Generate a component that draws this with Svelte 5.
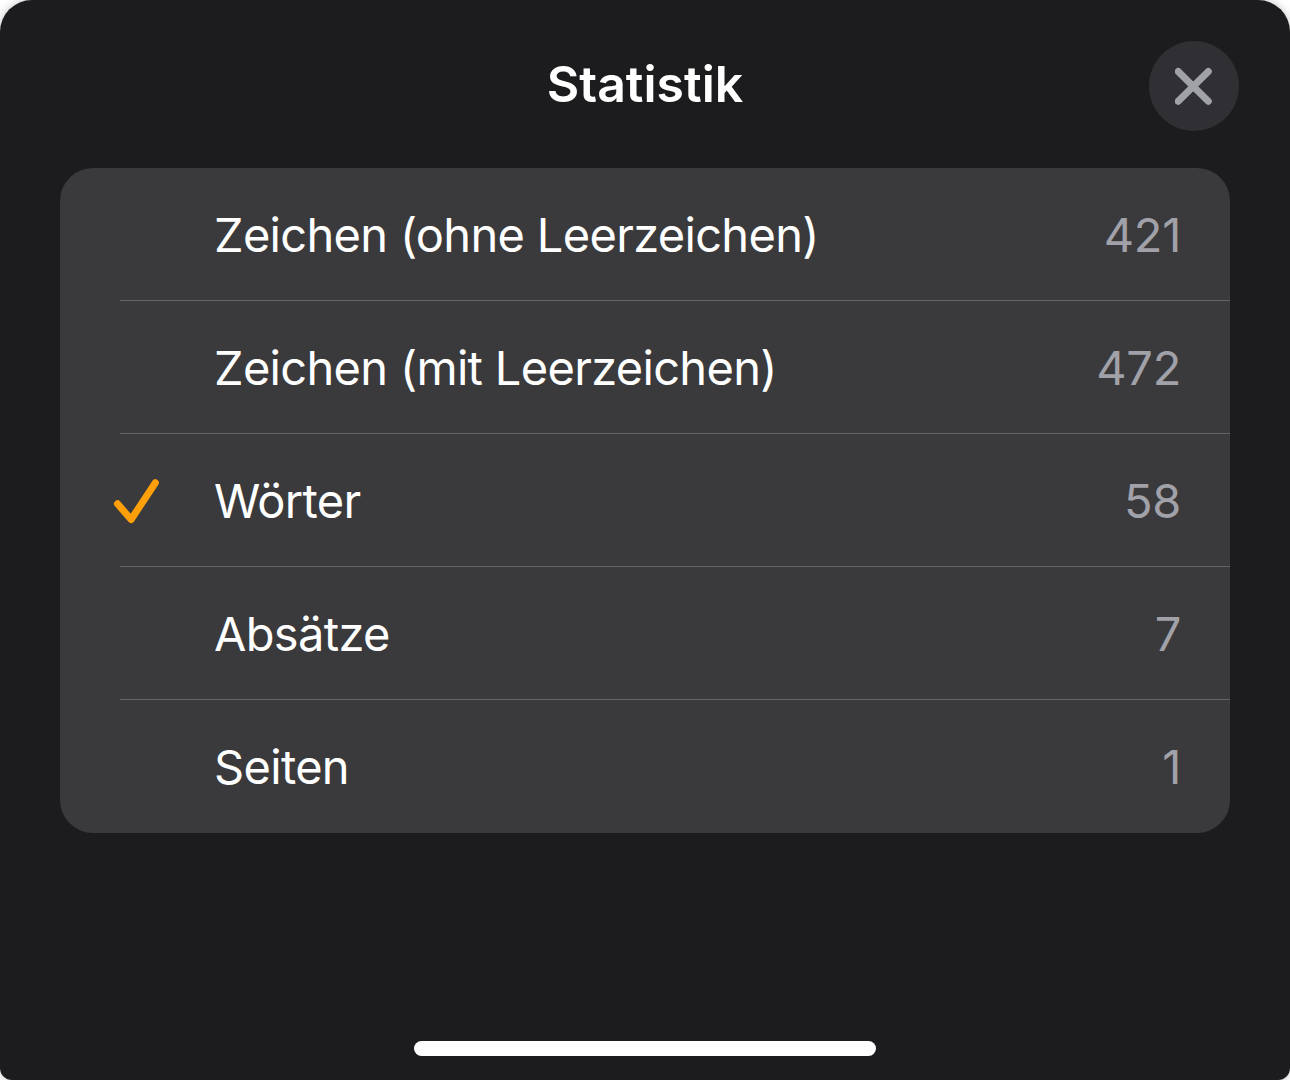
<script lang="ts">
	interface Stat {
		id: string;
		label: string;
		value: number;
	}

	const stats: Stat[] = [
		{ id: 'chars', label: 'Zeichen (ohne Leerzeichen)', value: 421 },
		{ id: 'chars-spaces', label: 'Zeichen (mit Leerzeichen)', value: 472 },
		{ id: 'words', label: 'Wörter', value: 58 },
		{ id: 'paragraphs', label: 'Absätze', value: 7 },
		{ id: 'pages', label: 'Seiten', value: 1 }
	];

	let selected = $state('words');
	let open = $state(true);
</script>

{#if open}
	<main class="sheet">
		<header>
			<h1>Statistik</h1>
			<button class="close" aria-label="Schließen" onclick={() => (open = false)}>
				<svg width="38" height="38" viewBox="0 0 38 38">
					<path d="M3.2 4.5L33.3 34.3M33.3 4.5L3.2 34.3" />
				</svg>
			</button>
		</header>

		<div class="list">
			{#each stats as stat (stat.id)}
				<button class="row" onclick={() => (selected = stat.id)}>
					<span class="mark">
						{#if selected === stat.id}
							<svg width="48" height="46" viewBox="0 0 48 46">
								<path d="M4.5 25.8L18.1 41.5L42.4 4.8" />
							</svg>
						{/if}
					</span>
					<span class="label">{stat.label}</span>
					<span class="value">{stat.value}</span>
				</button>
			{/each}
		</div>

		<div class="home"></div>
	</main>
{/if}

<style>
	:global(body) {
		background: #fff;
	}
	.sheet {
		display: flex;
		flex-direction: column;
		box-sizing: border-box;
		height: 1080px;
		padding: 0 60px 24px;
		border-radius: 32px 32px 12px 12px;
		background: #1c1c1e;
		box-shadow: 0 0 10px rgba(0, 0, 0, 0.25);
		color: #fff;
		font-family: Inter, "Liberation Sans", sans-serif;
	}
	header {
		display: grid;
		grid-template-columns: 90px 1fr 90px;
		align-items: center;
		height: 168px;
		margin: 0 -9px;
	}
	h1 {
		grid-column: 2;
		margin: 0;
		font-size: 50px;
		font-weight: 600;
		line-height: 60px;
		text-align: center;
	}
	button {
		border: none;
		padding: 0;
		background: none;
		color: inherit;
		font: inherit;
	}
	.close {
		display: flex;
		align-items: center;
		justify-content: center;
		width: 90px;
		height: 90px;
		margin-top: 4px;
		border-radius: 50%;
		background: #303034;
	}
	svg {
		display: block;
		fill: none;
		stroke-linecap: round;
		stroke-linejoin: round;
	}
	.close svg {
		stroke: #a1a1a8;
		stroke-width: 7;
	}
	.list {
		overflow: hidden;
		border-radius: 33px;
		background: #3a3a3c;
	}
	.row {
		display: grid;
		grid-template-columns: 94px 1fr auto;
		align-items: center;
		box-sizing: border-box;
		width: 1110px;
		height: 133px;
		margin-left: 60px;
		padding: 2px 49px 0 0;
		border-bottom: 1px solid #656569;
		font-size: 47px;
		line-height: 58px;
		text-align: left;
	}
	.row:last-child {
		border-bottom-color: transparent;
	}
	.mark svg {
		margin-left: -7px;
		stroke: #ff9f0a;
		stroke-width: 7;
	}
	.label {
		letter-spacing: -0.68px;
	}
	.value {
		color: #a1a1a9;
		letter-spacing: -0.3px;
	}
	.home {
		width: 462px;
		height: 15px;
		margin: auto auto 0;
		border-radius: 8px;
		background: #fff;
	}
</style>
